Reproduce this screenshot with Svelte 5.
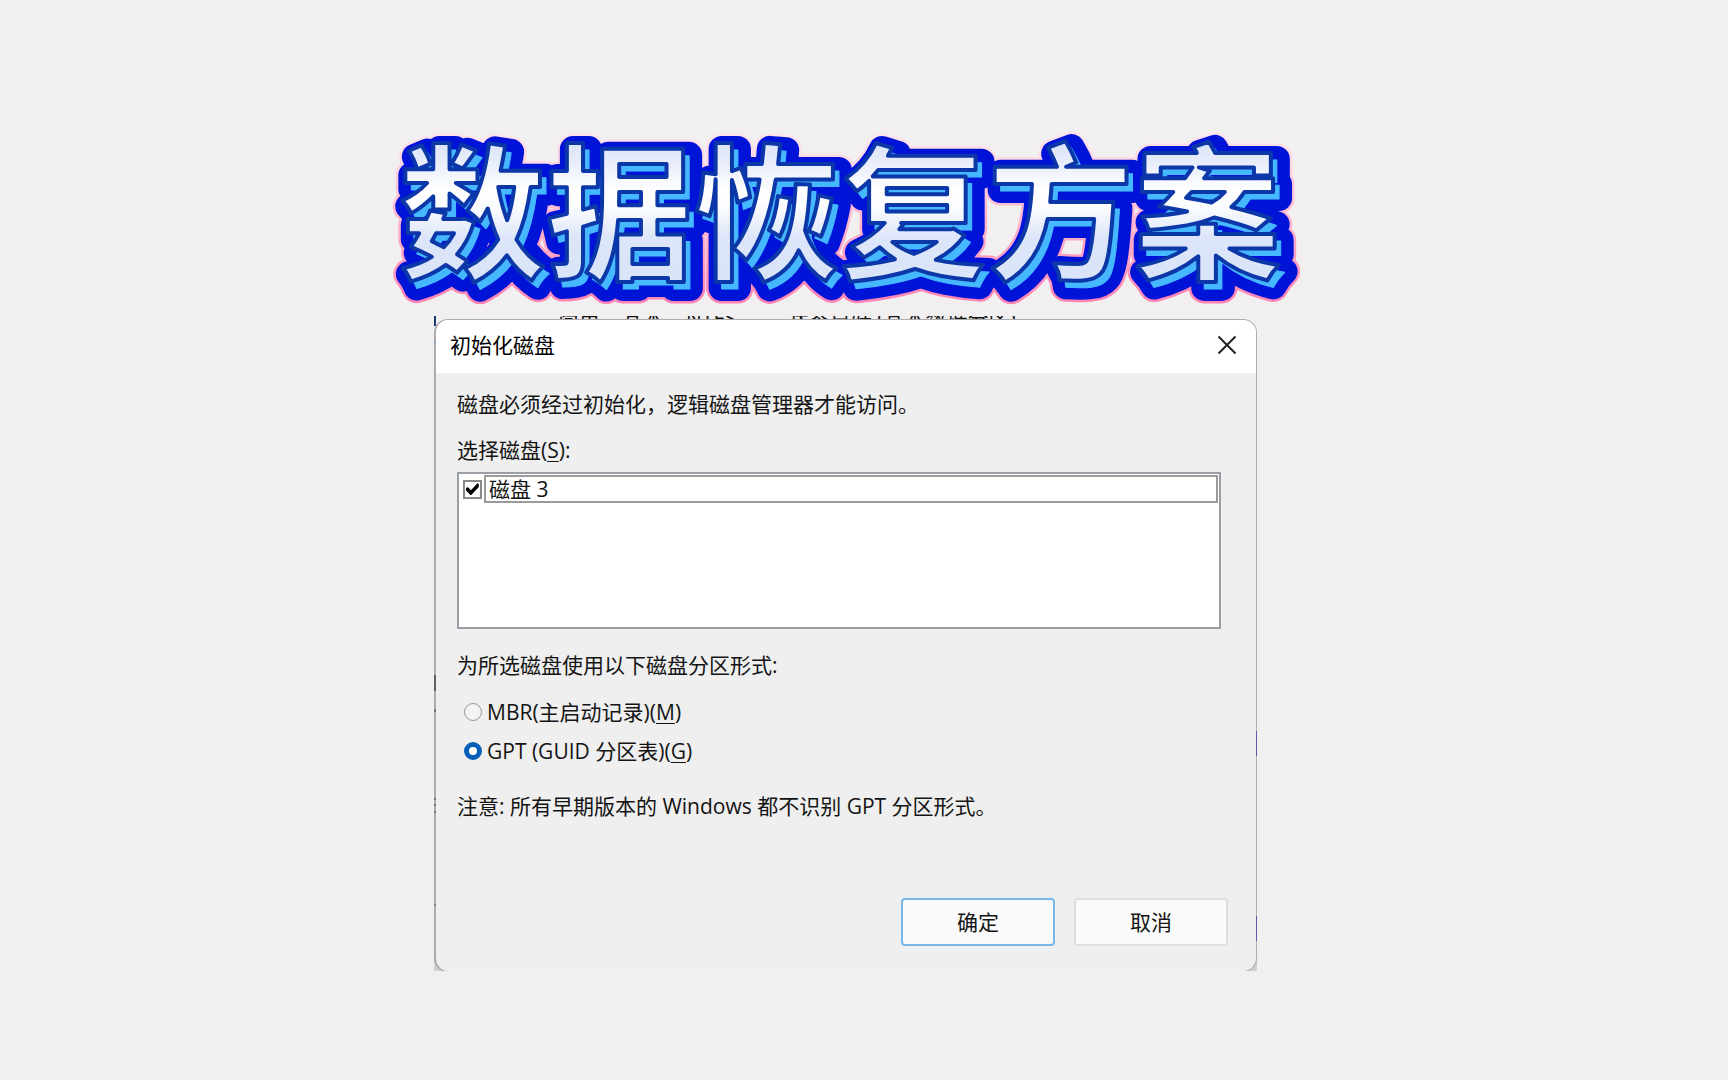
<script>
  let disks = $state([{ id: 'disk3', name: '磁盘 3', selected: true }]);
  let style = $state('gpt');
</script>

<main class="page">
  <h1 class="banner">
    <svg viewBox="0 0 920 190" role="img" aria-label="数据恢复方案">
      <defs>
        <linearGradient id="face" gradientUnits="userSpaceOnUse" x1="0" y1="24" x2="0" y2="162">
          <stop offset="0" stop-color="#dbe4f8" />
          <stop offset="0.12" stop-color="#e6ecfa" />
          <stop offset="0.34" stop-color="#ffffff" />
          <stop offset="0.46" stop-color="#fbfcff" />
          <stop offset="0.68" stop-color="#dce5f9" />
          <stop offset="1" stop-color="#dae4f8" />
        </linearGradient>
        <linearGradient id="halo" gradientUnits="userSpaceOnUse" x1="0" y1="10" x2="0" y2="184">
          <stop offset="0" stop-color="#fde3ec" />
          <stop offset="0.5" stop-color="#ffb4cf" />
          <stop offset="1" stop-color="#ff7fb2" />
        </linearGradient>
      </defs>
      <use href="#headline" x="6" y="6" class="halo" />
      <use href="#headline" x="6" y="6" class="base" />
      <use href="#headline" x="6" y="7" class="depth" />
      <g class="face"><text id="headline" x="13" y="148">数据恢复方案</text></g>
    </svg>
  </h1>

  <section class="frame">
    <div class="behind" aria-hidden="true">
      <span>简单</span><span>基本</span><span class="fs">NTFS</span><span>状态良好 (基本数据分区)</span>
    </div>
    <div class="dialog" role="dialog" aria-labelledby="dialog-title">
      <header class="titlebar">
        <h2 id="dialog-title">初始化磁盘</h2>
        <button class="close" type="button" aria-label="关闭">
          <svg viewBox="0 0 20 20" width="20" height="20"><path d="M1.5 1.5 18.5 18.5M18.5 1.5 1.5 18.5" /></svg>
        </button>
      </header>
      <form class="body" onsubmit={(e) => e.preventDefault()}>
        <p class="intro">磁盘必须经过初始化，逻辑磁盘管理器才能访问。</p>
        <p class="label" id="disk-label">选择磁盘(<u>S</u>):</p>
        <div class="list" role="group" aria-labelledby="disk-label">
          {#each disks as disk (disk.id)}
            <div class="disk">
              <input type="checkbox" id={disk.id} bind:checked={disk.selected} />
              <label for={disk.id}>{disk.name}</label>
            </div>
          {/each}
        </div>
        <fieldset>
          <legend>为所选磁盘使用以下磁盘分区形式:</legend>
          <label class="option">
            <input type="radio" name="style" value="mbr" bind:group={style} />
            <span>MBR(主启动记录)(<u>M</u>)</span>
          </label>
          <label class="option">
            <input type="radio" name="style" value="gpt" bind:group={style} />
            <span>GPT (GUID 分区表)(<u>G</u>)</span>
          </label>
        </fieldset>
        <p class="note">注意: 所有早期版本的 Windows 都不识别 GPT 分区形式。</p>
        <div class="actions">
          <button class="primary" type="submit">确定</button>
          <button type="button">取消</button>
        </div>
      </form>
    </div>
  </section>
</main>

<style>
  :global(body) {
    background: #f1eff0;
  }
  .page {
    box-sizing: border-box;
    min-height: 100vh;
    padding: 120px 37px 60px 0;
    display: flex;
    flex-direction: column;
    align-items: center;
    gap: 6px;
    font-family: 'Open Sans', 'Noto Sans CJK SC', sans-serif;
    font-size: 21px;
    line-height: 28px;
    color: #141414;
  }
  h1, h2, p, fieldset, legend {
    margin: 0;
    padding: 0;
    border: 0;
    font-size: inherit;
    font-weight: 400;
  }
  .banner {
    width: 100%;
    max-width: 920px;
  }
  .banner svg {
    display: block;
    width: 100%;
    overflow: visible;
    font-family: 'Noto Sans CJK SC', sans-serif;
    font-size: 147px;
    font-weight: 700;
    stroke-linejoin: round;
  }
  .halo { fill: url(#halo); stroke: url(#halo); stroke-width: 31px; }
  .base { fill: #0014d8; stroke: #0014d8; stroke-width: 26px; }
  .depth { fill: #46b8ff; stroke: #46b8ff; stroke-width: 1px; }
  .face { fill: url(#face); stroke: #0c37a8; stroke-width: 4px; }

  .frame {
    position: relative;
    width: 100%;
    max-width: 823px;
    overflow: hidden;
    background: linear-gradient(#f1eff0 50%, #cfcfcf 50%);
  }
  .frame::before,
  .frame::after {
    content: '';
    position: absolute;
    z-index: 1;
    top: 0;
    bottom: 0;
  }
  .frame::before {
    left: 0;
    width: 2px;
    background: linear-gradient(
      #1d3a70 10px, transparent 10px 25px, #7fa4cf 25px 27px, transparent 27px 359px,
      #606060 359px 375px, transparent 375px 393px, #777 393px 396px, transparent 396px 482px,
      #777 482px 484px, transparent 484px 488px, #777 488px 490px, transparent 490px 495px,
      #777 495px 497px, transparent 497px 588px, #808080 588px 590px, transparent 590px
    );
  }
  .frame::after {
    right: 0;
    width: 1px;
    background: linear-gradient(
      transparent 415px, #5a5aa8 415px 440px, transparent 440px 600px, #5a5aa8 600px 625px, transparent 625px
    );
  }
  .behind {
    display: flex;
    align-items: center;
    gap: 22px;
    height: 3px;
    padding-left: 124px;
    overflow: hidden;
    white-space: nowrap;
    line-height: 16px;
  }
  .behind .fs { margin-right: 30px; }
  .dialog {
    box-sizing: border-box;
    margin-bottom: -1px;
    border: 2px solid #acacac;
    border-top-width: 1px;
    border-right-width: 1px;
    border-bottom-width: 1px;
    border-radius: 14px;
    overflow: hidden;
    background: #efefef;
  }
  .titlebar {
    box-sizing: border-box;
    display: flex;
    justify-content: space-between;
    align-items: center;
    height: 53px;
    padding: 0 19px 3px 14px;
    background: #fff;
    color: #000;
  }
  .close {
    display: flex;
    padding: 0;
    border: 0;
    background: none;
  }
  .close path {
    fill: none;
    stroke: #222;
    stroke-width: 2;
  }
  .body {
    padding: 17px 35px 25px 21px;
  }
  .label { margin-top: 18px; }
  u {
    text-decoration-thickness: 1px;
    text-underline-offset: 3px;
  }
  .list {
    box-sizing: border-box;
    min-height: 157px;
    margin-top: 8px;
    padding: 1px;
    border: 2px solid #9a9fa6;
    background: #fff;
  }
  .disk {
    display: flex;
    align-items: center;
    gap: 2px;
    padding-left: 3px;
  }
  .disk label {
    flex: 1;
    box-sizing: border-box;
    height: 28px;
    line-height: 24px;
    padding-left: 3px;
    border: 2px solid #9b9b9b;
  }
  input {
    appearance: none;
    flex: none;
    box-sizing: border-box;
    margin: 0;
  }
  input[type='checkbox'] {
    width: 19px;
    height: 19px;
    border: 2px solid #8a8a8a;
    background: #fff;
  }
  input[type='checkbox']:checked::before {
    content: '';
    display: block;
    width: 15px;
    height: 15px;
    background: #000;
    clip-path: polygon(7% 42%, 20% 38%, 40% 58%, 82% 12%, 92% 16%, 92% 36%, 42% 90%, 34% 88%, 7% 60%);
  }
  fieldset { margin-top: 22px; }
  legend { display: block; }
  .option {
    display: flex;
    align-items: center;
    gap: 5px;
    width: fit-content;
    margin-top: 11px;
    padding-left: 7px;
  }
  legend + .option { margin-top: 19px; }
  input[type='radio'] {
    width: 18px;
    height: 18px;
    border: 1px solid #999;
    border-radius: 50%;
    background: #f3f3f3;
  }
  input[type='radio']:checked {
    border: 5px solid #0560b9;
    background: #fff;
  }
  .note { margin-top: 27px; }
  .actions {
    display: flex;
    justify-content: flex-end;
    gap: 19px;
    margin: 78px -7px 0 0;
  }
  .actions button {
    width: 154px;
    height: 48px;
    padding: 0;
    border: 2px solid #dedede;
    border-radius: 4px;
    background: #fafafa;
    font: inherit;
    color: inherit;
  }
  .actions .primary { border-color: #79b7e8; }
</style>
